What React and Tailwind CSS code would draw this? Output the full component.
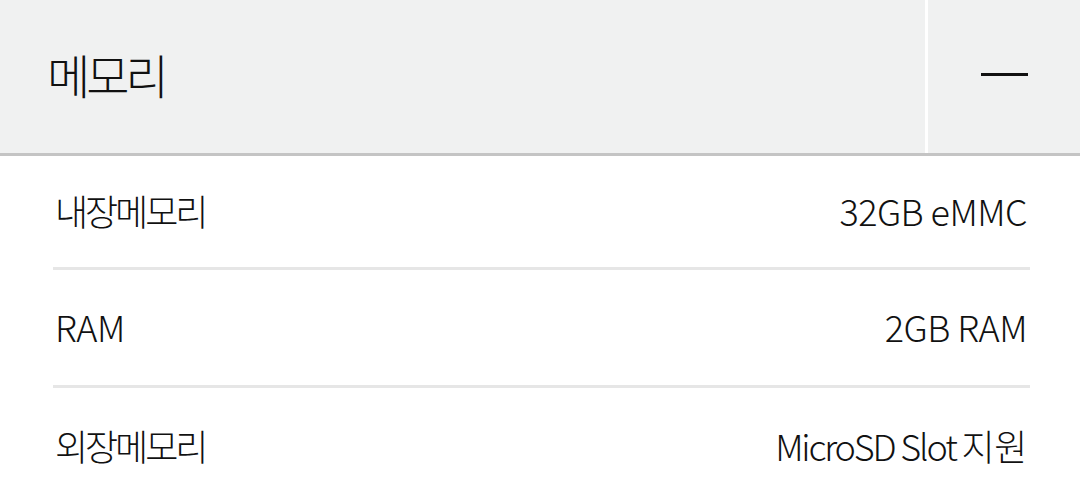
function Mixed({ text, ko = "tracking-[-0.085em]", la = "tracking-[-0.015em]" }) {
  const parts = text.match(/[\uAC00-\uD7A3]+|[^\uAC00-\uD7A3]+/g) || [];
  return (
    <>
      {parts.map((p, i) =>
        /[\uAC00-\uD7A3]/.test(p) ? (
          <span key={i} className={ko}>{p}</span>
        ) : (
          <span key={i} className={la}>{p}</span>
        )
      )}
    </>
  );
}

export default function App() {
  const rows = [
    { k: "내장메모리", v: "32GB eMMC", h: "h-[114px]" },
    { k: "RAM", v: "2GB RAM", h: "h-[118px]" },
    { k: "외장메모리", v: "MicroSD Slot 지원", h: "h-[118px]", ko: "tracking-[-0.01em]", la: "tracking-[-0.06em]" },
  ];
  return (
    <div className="w-[1080px] h-[499px] overflow-hidden bg-white text-[#111]" style={{ fontFamily: '"Noto Sans CJK KR", "Noto Sans", sans-serif' }}>
      <div className="flex h-[156px] bg-[#f0f1f1] border-b-[3px] border-[#c4c4c4]">
        <div className="flex-1 flex items-center pl-[47px]">
          <span className="text-[47px] font-light leading-none tracking-[-0.085em] -mt-[6px]">메모리</span>
        </div>
        <div className="w-[3px] bg-white" />
        <div className="w-[152px] flex items-center justify-center">
          <div className="w-[47px] h-[3px] bg-[#111] -mt-[4px]" />
        </div>
      </div>
      <div className="pl-[53px] pr-[50px]">
        {rows.map((r, i) => (
          <div key={i} className={`flex items-center justify-between ${r.h} ${i < rows.length - 1 ? "border-b-[3px] border-[#e6e6e6]" : ""}`}>
            <span className="text-[36px] font-light leading-none pl-[2px] -mt-[4px]"><Mixed text={r.k} /></span>
            <span className="text-[36px] font-light leading-none pr-[3px] -mt-[4px]"><Mixed text={r.v} ko={r.ko} la={r.la} /></span>
          </div>
        ))}
      </div>
    </div>
  );
}
